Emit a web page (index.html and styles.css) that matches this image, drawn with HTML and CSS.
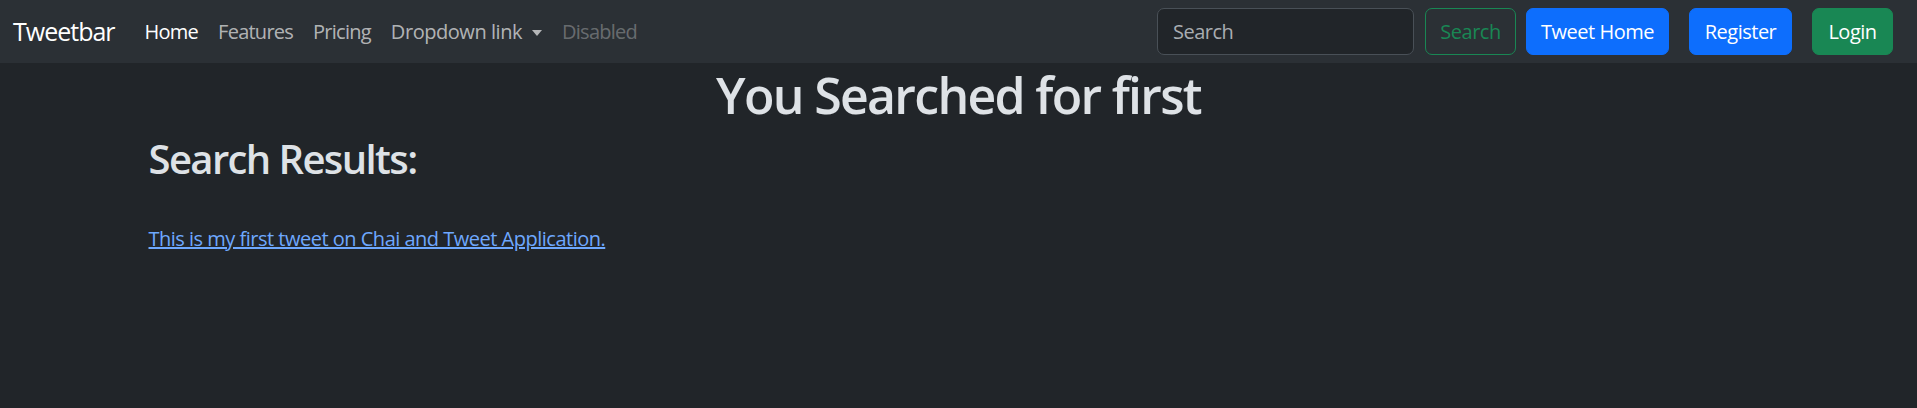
FILE: index.html
```html
<!DOCTYPE html>
<html lang="en">
<head>
<meta charset="utf-8">
<title>Tweetbar</title>
<link rel="stylesheet" href="styles.css">
</head>
<body>
<nav class="navbar">
  <div class="nav-left">
    <a class="brand" href="#">Tweetbar</a>
    <ul class="nav-links">
      <li><a class="nav-link active" href="#">Home</a></li>
      <li><a class="nav-link" href="#">Features</a></li>
      <li><a class="nav-link" href="#">Pricing</a></li>
      <li><a class="nav-link dropdown" href="#">Dropdown link<span class="caret"></span></a></li>
      <li><a class="nav-link disabled" href="#">Disabled</a></li>
    </ul>
  </div>
  <div class="nav-right">
    <form class="search-form">
      <input class="search-input" type="search" placeholder="Search">
      <button class="btn btn-outline-success" type="button">Search</button>
    </form>
    <a class="btn btn-primary btn-tweet" href="#">Tweet Home</a>
    <a class="btn btn-primary btn-register" href="#">Register</a>
    <a class="btn btn-success btn-login" href="#">Login</a>
  </div>
</nav>
<main class="container">
  <h1 class="title">You Searched for first</h1>
  <h2 class="subtitle">Search Results:</h2>
  <div class="results">
    <a class="result-link" href="#">This is my first tweet on Chai and Tweet Application.</a>
  </div>
</main>
</body>
</html>
```
FILE: styles.css
```css
* { box-sizing: border-box; }
html, body {
  margin: 0;
  padding: 0;
}
body {
  background: #212529;
  color: #dee2e6;
  font-family: "Open Sans", "Noto Sans", sans-serif;
  font-size: 20px;
  line-height: 1.5;
}
a { text-decoration: none; }

.navbar {
  height: 63px;
  background: #2b3035;
  display: flex;
  align-items: center;
  justify-content: space-between;
  padding: 0 24px 0 13px;
}
.nav-left {
  display: flex;
  align-items: center;
}
.brand {
  color: #ffffff;
  font-size: 25px;
  line-height: 1.5;
  margin-right: 20px;
  letter-spacing: -1px;
}
.nav-links {
  display: flex;
  list-style: none;
  margin: 0;
  padding: 0;
}
.nav-link {
  display: block;
  padding: 6px 10px;
  color: rgba(255, 255, 255, 0.65);
  letter-spacing: -0.75px;
}
.nav-link.dropdown { letter-spacing: -0.45px; }
.nav-link.active { color: #ffffff; }
.nav-link.disabled { color: rgba(255, 255, 255, 0.3); }
.caret {
  display: inline-block;
  margin-left: 10px;
  vertical-align: 3px;
  border-top: 6px solid rgba(255, 255, 255, 0.65);
  border-left: 5.5px solid transparent;
  border-right: 5.5px solid transparent;
}

.nav-right {
  display: flex;
  align-items: center;
}
.search-form {
  display: flex;
  align-items: center;
  gap: 11px;
  margin-right: 10px;
}
.search-input {
  width: 257px;
  height: 47px;
  background: #212529;
  border: 1px solid #495057;
  border-radius: 7px;
  color: #dee2e6;
  font-family: inherit;
  font-size: 20px;
  padding: 0 15px;
  letter-spacing: -0.5px;
}
.search-input::placeholder { color: #a9adb2; }

.btn {
  display: inline-flex;
  align-items: center;
  justify-content: center;
  height: 47px;
  padding: 0 15px;
  border-radius: 7px;
  border: 1px solid transparent;
  font-family: inherit;
  font-size: 20px;
  color: #ffffff;
  letter-spacing: -0.5px;
  white-space: nowrap;
}
.btn-outline-success {
  width: 91px;
  background: transparent;
  border-color: #198754;
  color: #198754;
}
.btn-primary {
  background: #0d6efd;
  border-color: #0d6efd;
}
.btn-success {
  background: #198754;
  border-color: #198754;
}
.btn-tweet { width: 143px; margin-right: 20px; }
.btn-register { width: 103px; margin-right: 20px; }
.btn-login { width: 81px; }

.container {
  max-width: 1650px;
  margin: 0 auto;
  padding: 0 15px;
}
.title {
  margin: 0 0 10px;
  padding-top: 2px;
  text-align: center;
  font-size: 50px;
  font-weight: 600;
  line-height: 1.2;
  color: #dee2e6;
  letter-spacing: -1.7px;
}
.subtitle {
  margin: 0 0 10px;
  font-size: 40px;
  font-weight: 600;
  line-height: 1.2;
  color: #dee2e6;
  letter-spacing: -1.6px;
}
.results {
  margin-top: 41px;
}
.result-link {
  color: #6ea8fe;
  text-decoration: underline;
  letter-spacing: -0.5px;
}
```
